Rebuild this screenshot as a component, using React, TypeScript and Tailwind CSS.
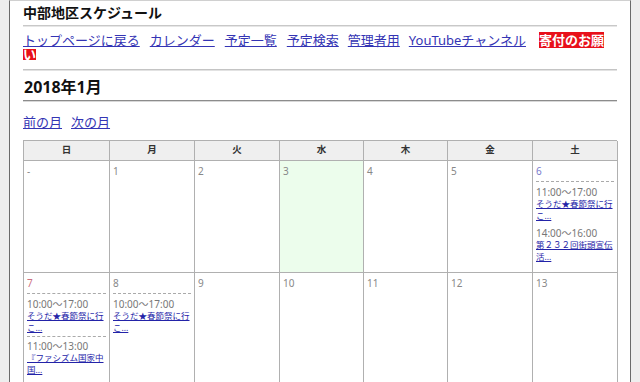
import React from "react";

type Ev = { time: string; title: string };

const days: { label: string; color: string; bg?: string; events: Ev[]; sep?: boolean }[][] = [
  [
    { label: "-", color: "text-[#888]", events: [] },
    { label: "1", color: "text-[#888]", events: [] },
    { label: "2", color: "text-[#888]", events: [] },
    { label: "3", color: "text-[#888]", bg: "bg-[#ecfdec]", events: [] },
    { label: "4", color: "text-[#888]", events: [] },
    { label: "5", color: "text-[#888]", events: [] },
    {
      label: "6",
      color: "text-[#7a7acc]",
      events: [
        { time: "11:00〜17:00", title: "そうだ★春節祭に行こ..." },
        { time: "14:00〜16:00", title: "第２３２回街頭宣伝活..." },
      ],
    },
  ],
  [
    {
      label: "7",
      color: "text-[#cc7080]",
      sep: true,
      events: [
        { time: "10:00〜17:00", title: "そうだ★春節祭に行こ..." },
        { time: "11:00〜13:00", title: "『ファシズム国家中国..." },
      ],
    },
    {
      label: "8",
      color: "text-[#888]",
      events: [{ time: "10:00〜17:00", title: "そうだ★春節祭に行こ..." }],
    },
    { label: "9", color: "text-[#888]", events: [] },
    { label: "10", color: "text-[#888]", events: [] },
    { label: "11", color: "text-[#888]", events: [] },
    { label: "12", color: "text-[#888]", events: [] },
    { label: "13", color: "text-[#888]", events: [] },
  ],
];

const heads = ["日", "月", "火", "水", "木", "金", "土"];

function Cell({ d }: { d: (typeof days)[0][0] }) {
  return (
    <div className={`h-[112px] border-r border-b border-[#b0b0b0] pt-[4px] pl-[3px] pr-[3px] ${d.bg ?? "bg-white"}`}>
      <div
        className={`text-[10px] leading-[13px] ${d.color} ${
          d.events.length ? "pb-[3px] border-b border-dashed border-[#aaa]" : ""
        }`}
      >
        {d.label}
      </div>
      {d.events.map((e, i) => (
        <div
          key={i}
          className={
            i === 0
              ? "mt-[4px]"
              : d.sep
              ? "mt-[3px] pt-[3px] border-t border-dashed border-[#aaa]"
              : "mt-[6px]"
          }
        >
          <div className="text-[10px] leading-[12px] text-[#777]">{e.time}</div>
          <a href="#" className="block text-[8.5px] leading-[11.5px] text-[#2323a8] underline break-all">
            {e.title}
          </a>
        </div>
      ))}
    </div>
  );
}

export default function App() {
  const link = "text-[#3434b4] underline";
  return (
    <div className="min-h-[382px] bg-[#eeeeee] font-['Noto_Sans','Noto_Sans_CJK_JP',sans-serif]">
      <div className="ml-[9px] w-[622px] min-h-[382px] bg-white border-x border-x-[#6b6b6b] border-t border-t-[#d0d0d0] px-[13px] pb-[20px]">
        <div className="pt-[2px] text-[14px] leading-[19px] font-bold text-[#111]">中部地区スケジュール</div>
        <div className="mt-[3px] h-[2px] border-t border-t-[#c8c8c8] border-b border-b-[#e6e6e6]" />
        <div className="mt-[5px] text-[13px]">
          <div className="h-[16px] leading-[16px] whitespace-nowrap">
            <a href="#" className={link}>トップページに戻る</a>
            <a href="#" className={`${link} ml-[10px]`}>カレンダー</a>
            <a href="#" className={`${link} ml-[10px]`}>予定一覧</a>
            <a href="#" className={`${link} ml-[10px]`}>予定検索</a>
            <a href="#" className={`${link} ml-[9px]`}>管理者用</a>
            <a href="#" className={`${link} ml-[9px]`}>YouTubeチャンネル</a>
            <a href="#" className="ml-[13px] inline-block h-[16px] leading-[16px] align-top bg-[#e8101a] text-white font-bold">
              寄付のお願
            </a>
          </div>
          <div className="mt-[1px] h-[11px] leading-[11px]">
            <a href="#" className="inline-block h-[11px] leading-[11px] align-top bg-[#e8101a] text-white font-bold">
              い
            </a>
          </div>
        </div>
        <div className="mt-[9px] h-[2px] border-t border-t-[#c4c4c4] border-b border-b-[#e2e2e2]" />
        <div className="mt-[6px] pl-[1px] text-[16px] leading-[20px] font-bold text-[#111]">2018年1月</div>
        <div className="mt-[3px] h-[2px] border-t border-t-[#8c8c8c] border-b border-b-[#d8d8d8]" />
        <div className="mt-[12px] text-[13px] leading-[16px]">
          <a href="#" className={link}>前の月</a>
          <a href="#" className={`${link} ml-[9px]`}>次の月</a>
        </div>
        <div className="mt-[10px] grid grid-cols-[86px_85px_85px_84px_84px_85px_85px] border-l border-t border-[#b0b0b0]">
          {heads.map((h) => (
            <div
              key={h}
              className="h-[20px] border-r border-b border-[#b0b0b0] bg-[#efefef] flex items-center justify-center text-[9.5px] font-bold text-[#333]"
            >
              {h}
            </div>
          ))}
          {days.flat().map((d, i) => (
            <Cell key={i} d={d} />
          ))}
        </div>
      </div>
    </div>
  );
}
